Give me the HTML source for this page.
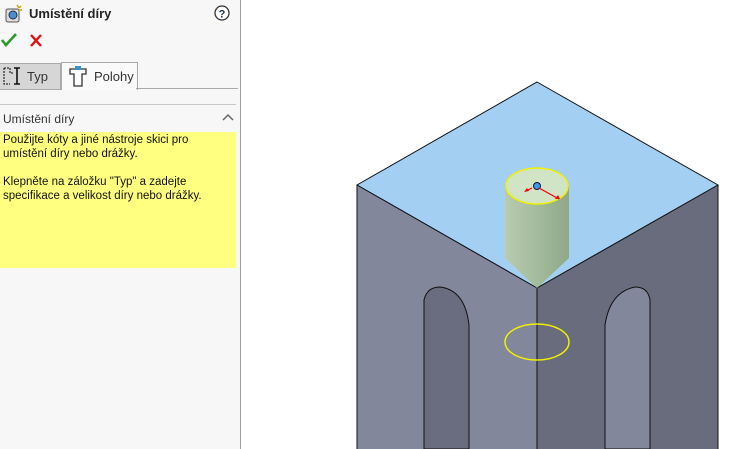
<!DOCTYPE html>
<html><head><meta charset="utf-8"><style>
body{margin:0;width:750px;height:449px;overflow:hidden;background:#fff;font-family:"Liberation Sans",sans-serif;position:relative}
.panel{position:absolute;left:0;top:0;width:240px;height:449px;background:#f7f7f7;border-right:1px solid #a0a0a0}
.t{position:absolute;white-space:nowrap}
</style></head><body>
<div class="panel">
  <svg class="t" style="left:3px;top:3px" width="22" height="22" viewBox="0 0 22 22">
    <rect x="3" y="6" width="13" height="13" rx="2" fill="#ddd" stroke="#555"/>
    <circle cx="10" cy="12" r="4" fill="#4a8fd0" stroke="#234"/>
    <path d="M14 2l2 3M18 3l-2 2M19 7h-3" stroke="#e0a000" stroke-width="1.5"/>
  </svg>
  <div class="t" style="left:29px;top:6px;font-size:13px;font-weight:bold;color:#222">Umístění díry</div>
  <svg class="t" style="left:214px;top:5px" width="16" height="16"><circle cx="8" cy="8" r="7" fill="#fff" stroke="#333" stroke-width="1.3"/><text x="8" y="12.5" font-size="11" font-weight="bold" text-anchor="middle" fill="#235" font-family="Liberation Sans">?</text></svg>
  <svg class="t" style="left:1px;top:33px" width="16" height="14"><path d="M1 7l4 5L15 1" stroke="#2a9a2a" stroke-width="2.6" fill="none"/></svg>
  <svg class="t" style="left:29px;top:34px" width="14" height="13"><path d="M2 1l10 11M12 1L2 12" stroke="#e01010" stroke-width="2.4"/></svg>
  <div class="t" style="left:0;top:63px;width:60px;height:25px;background:#d6d6d6;border:1px solid #aaa;border-left:none"></div>
  <svg class="t" style="left:2px;top:66px" width="20" height="20"><path d="M2 2h6v5h3M2 2v16h6" stroke="#333" stroke-width="1.3" fill="none" stroke-dasharray="2 1"/><path d="M15 2v16M12 2h6M12 18h6" stroke="#111" stroke-width="1.6"/></svg>
  <div class="t" style="left:27px;top:69px;font-size:13px;color:#333">Typ</div>
  <div class="t" style="left:61px;top:62px;width:75px;height:27px;background:#fafafa;border:1px solid #aaa;border-bottom:none"></div>
  <svg class="t" style="left:68px;top:65px" width="20" height="22"><path d="M2 4h16v5h-4v12H6V9H2z" fill="#fff" stroke="#333" stroke-width="1.3"/><rect x="7" y="1" width="6" height="4" fill="#3a8fd0"/></svg>
  <div class="t" style="left:94px;top:69px;font-size:13px;color:#333">Polohy</div>
  <div class="t" style="left:136px;top:88px;width:102px;height:1px;background:#aaa"></div>
  <div class="t" style="left:0;top:104px;width:236px;height:1px;background:#c8c8c8"></div>
  <div class="t" style="left:3px;top:112px;font-size:12px;color:#333">Umístění díry</div>
  <svg class="t" style="left:222px;top:113px" width="12" height="8"><path d="M1 7l5-5 5 5" stroke="#666" stroke-width="1.5" fill="none"/></svg>
  <div class="t" style="left:0;top:132px;width:236px;height:136px;background:#ffff80"></div>
  <div class="t" style="left:3px;top:133px;font-size:11.5px;line-height:14px;color:#111">Použijte kóty a jiné nástroje skici pro<br>umístění díry nebo drážky.<br><br>Klepněte na záložku "Typ" a zadejte<br>specifikace a velikost díry nebo drážky.</div>
</div>
<svg style="position:absolute;left:0;top:0" width="750" height="449">
  <defs>
    <linearGradient id="cyl" x1="0" x2="1"><stop offset="0" stop-color="#b8cbb0"/><stop offset=".5" stop-color="#a4bb9c"/><stop offset="1" stop-color="#8ea888"/></linearGradient>
  </defs>
  <polygon points="537,82 718,185 537,288 357,185" fill="#a3d0f2" stroke="#111" stroke-width="1"/>
  <polygon points="357,185 537,288 537,449 357,449" fill="#82879c"/>
  <polygon points="537,288 718,185 718,449 537,449" fill="#696c7d"/>
  <line x1="357" y1="185" x2="537" y2="288" stroke="#111"/>
  <line x1="537" y1="288" x2="718" y2="185" stroke="#111"/>
  <line x1="357" y1="185" x2="357" y2="449" stroke="#111"/>
  <line x1="718" y1="185" x2="718" y2="449" stroke="#111"/>
  <line x1="537" y1="288" x2="537" y2="449" stroke="#111"/>
  <path d="M505 186 V258 L537 288 L569 258 V186 Z" fill="url(#cyl)"/>
  <ellipse cx="537" cy="186" rx="31" ry="18" fill="#d2e4c6" stroke="#f0f000" stroke-width="1.5"/>
  <circle cx="537" cy="186" r="3.5" fill="#3a9be8" stroke="#113"/>
  <path d="M539 188l20 11M532 188l-6 3" stroke="#e00" stroke-width="1.2"/>
  <path d="M560 199l-5 0 3-4z M524 192l3-4 2 3z" fill="#e00"/>
  <path d="M424 449V300Q427 287 440 287Q465 290 469 325V449Z" fill="#6a6d80" stroke="#111"/>
  <path d="M605 449V325Q610 292 635 287Q648 287 650 300V449Z" fill="#82879c" stroke="#111"/>
  <ellipse cx="537" cy="342" rx="32" ry="18" fill="none" stroke="#f0f000" stroke-width="1.5"/>
</svg>
</body></html>
